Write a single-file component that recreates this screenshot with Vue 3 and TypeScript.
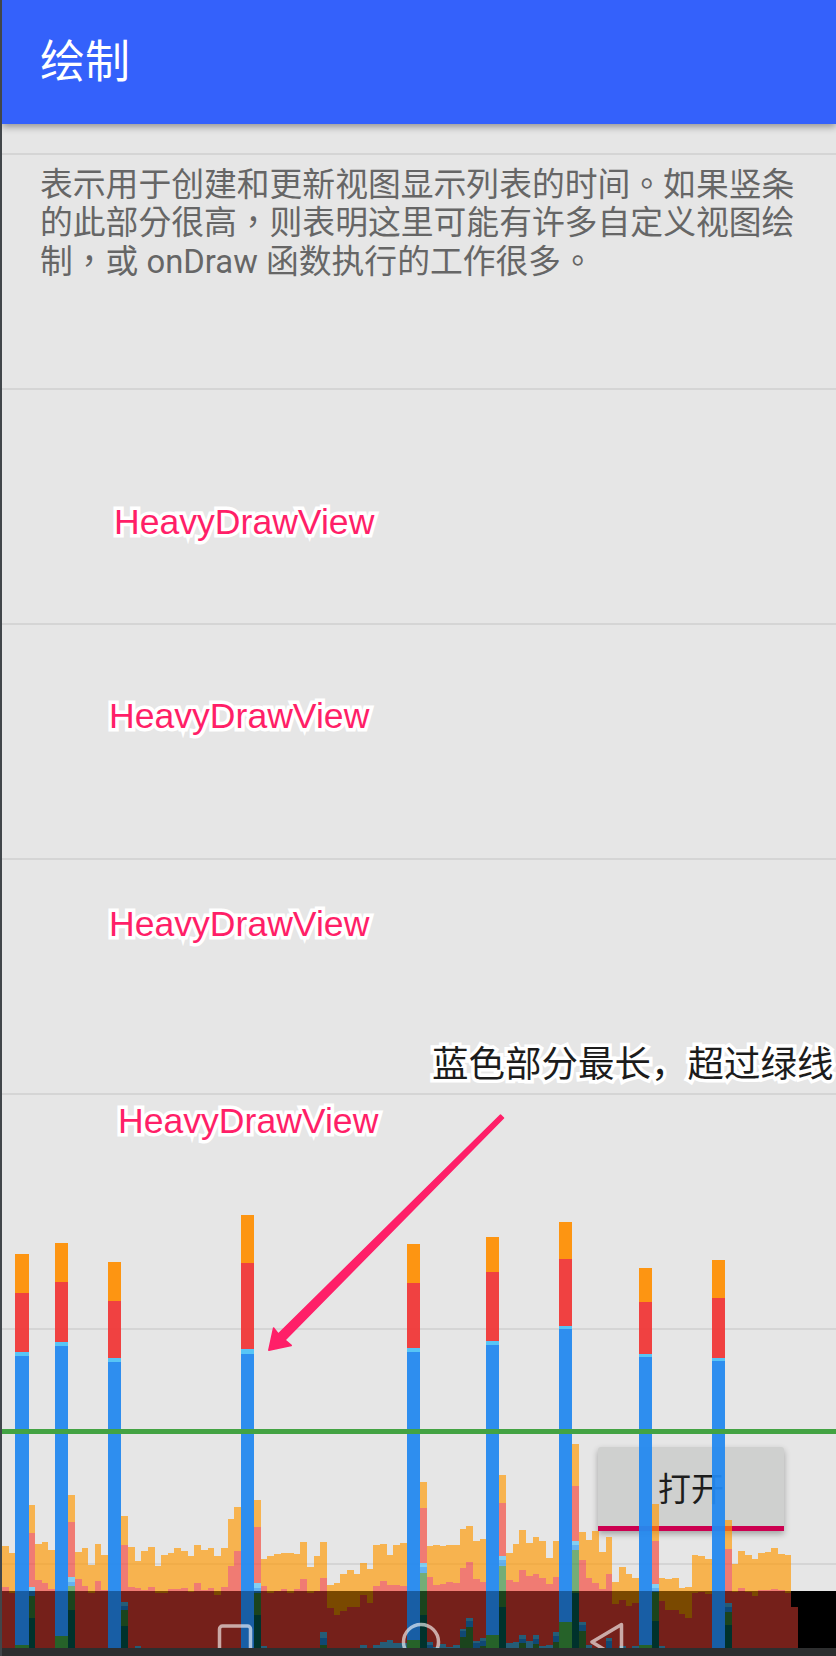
<template>
  <div class="screen">
    <header class="appbar">绘制</header>

    <main class="list">
      <div class="row row-stub"></div>
      <div class="row row-desc">
        <p class="desc">
          表示用于创建和更新视图显示列表的时间。如果竖条<br />的此部分很高，则表明这里可能有许多自定义视图绘<br />制，或 onDraw 函数执行的工作很多。
        </p>
      </div>
      <div class="row"></div>
      <div class="row"></div>
      <div class="row"></div>
      <div class="row"></div>
      <div class="row row-button">
        <button class="open-btn">打开</button>
      </div>
      <div class="row"></div>
    </main>

    <div class="navbar"></div>
    <div class="edge"></div>

    <!-- GPU 呈现模式条形图，叠在内容上方 -->
    <svg class="chart" width="836" height="448" viewBox="0 1200 836 448">
      <rect
        v-for="(seg, i) in segments"
        :key="i"
        :class="[seg.kind, { solid: seg.solid }]"
        :x="seg.x"
        :y="seg.y"
        :width="seg.w"
        :height="seg.h"
      />
    </svg>
    <div class="threshold"></div>

    <div class="nav-scrim">
      <svg width="836" height="57" viewBox="0 1591 836 57">
        <rect class="nav-icon" x="219.5" y="1626" width="31" height="40" rx="3" />
        <circle class="nav-icon" cx="421" cy="1642" r="17.5" />
        <path class="nav-icon" d="M621.5 1624.5 L592 1642 L621.5 1660 Z" />
      </svg>
    </div>

    <!-- 截图上的标注 -->
    <span
      v-for="label in labels"
      :key="label.top"
      class="note"
      :style="{ left: `${label.left}px`, top: `${label.top}px` }"
    >HeavyDrawView</span>
    <span class="note note-dark">蓝色部分最长，超过绿线</span>
    <svg class="arrow" width="836" height="260" viewBox="0 1100 836 260">
      <polygon points="500.5,1115 503.5,1118 285,1340 291.2,1345.4 268.8,1350.2 273.6,1328 278.3,1334" />
    </svg>
  </div>
</template>

<script setup lang="ts">
interface Segment {
  kind: string
  solid: boolean
  x: number
  y: number
  w: number
  h: number
}

const SLOT = 6.633
const CHART_Y = 1200
const BOTTOM = 448

// 每列顶部坐标（相对 CHART_Y），0 表示被高柱占用
const orange = [
  346, 353, 0, 0, 305, 344, 342, 350, 0, 0,
  295, 352, 348, 365, 344, 355, 0, 0, 316, 347,
  361, 351, 347, 366, 355, 353, 348, 351, 356, 345,
  350, 348, 356, 348, 319, 307, 0, 0, 300, 359,
  356, 354, 353, 353, 354, 342, 367, 356, 342, 385,
  383, 374, 370, 374, 363, 369, 345, 344, 355, 345,
  343, 0, 0, 282, 346, 345, 346, 345, 345, 329,
  326, 341, 339, 0, 0, 275, 353, 344, 330, 343,
  337, 341, 358, 341, 0, 0, 244, 332, 340, 331,
  352, 337, 382, 367, 374, 378, 0, 0, 304, 378,
  379, 378, 388, 387, 355, 356, 359, 0, 0, 320,
  364, 351, 355, 359, 353, 352, 348, 354, 355, 407
]

const red = [
  387, 393, 0, 0, 333, 380, 383, 389, 0, 0,
  322, 379, 386, 393, 381, 390, 0, 0, 345, 387,
  388, 390, 387, 393, 393, 389, 389, 388, 392, 383,
  390, 388, 395, 387, 366, 351, 0, 0, 327, 386,
  393, 391, 389, 393, 389, 379, 393, 391, 378, 408,
  415, 411, 407, 407, 395, 403, 386, 381, 385, 385,
  386, 0, 0, 308, 377, 385, 384, 382, 383, 368,
  362, 379, 382, 0, 0, 303, 380, 382, 370, 376,
  374, 378, 384, 377, 0, 0, 286, 360, 378, 383,
  389, 374, 404, 400, 406, 403, 0, 0, 341, 401,
  410, 410, 414, 418, 393, 392, 394, 0, 0, 349,
  392, 388, 392, 396, 390, 390, 389, 390, 393, 407
]

// 红色以下的层：sync, draw, measure, input
const lower: Record<number, number[]> = {
  4: [387, 391, 396, 418],
  10: [377, 382, 386, 410],
  18: [402, 406, 410, 426],
  20: [446],
  38: [383, 388, 393, 415],
  39: [446],
  48: [432, 438, 445],
  54: [445],
  56: [445],
  57: [442],
  58: [440],
  59: [443],
  60: [443],
  63: [363, 367, 373, 415],
  64: [442, 445],
  65: [447],
  66: [444],
  67: [447],
  68: [445],
  69: [429, 431, 437],
  70: [418, 421, 427],
  71: [441, 443],
  72: [438, 441, 446],
  75: [356, 360, 366, 407],
  76: [443],
  77: [442],
  78: [435, 439, 443],
  79: [441],
  80: [435, 439, 444],
  81: [446],
  82: [445],
  83: [432, 436, 442],
  86: [341, 345, 350, 393],
  87: [422, 425, 431],
  88: [445],
  91: [438, 441],
  93: [446],
  95: [446],
  98: [384, 388, 392, 421],
  99: [446],
  109: [403, 407, 412, 425]
}

const tall: [number, number[]][] = [
  [2, [54, 93, 152, 156, 445]],
  [8, [43, 82, 142, 146, 436]],
  [16, [62, 101, 158, 162]],
  [36, [15, 63, 149, 154]],
  [61, [44, 83, 148, 152, 440]],
  [73, [37, 72, 141, 145, 435]],
  [84, [22, 59, 126, 129, 422]],
  [96, [68, 102, 154, 157, 445]],
  [107, [60, 98, 158, 161]]
]

const KINDS = ['swap', 'issue', 'sync', 'draw', 'measure', 'input']

// 列边缘取整，相邻半透明柱之间才不会有缝
const edge = (slot: number) => Math.round(2 + slot * SLOT)

function stack(slot: number, span: number, tops: number[], solid: boolean): Segment[] {
  return tops.map((top, i) => ({
    kind: KINDS[i],
    solid,
    x: edge(slot),
    y: CHART_Y + top,
    w: edge(slot + span) - edge(slot),
    h: (tops[i + 1] ?? BOTTOM) - top
  }))
}

const segments: Segment[] = []
orange.forEach((top, slot) => {
  if (!top) return
  segments.push(...stack(slot, 1, [top, red[slot], ...(lower[slot] ?? [])], false))
})
tall.forEach(([slot, tops]) => {
  segments.push(...stack(slot, 2, tops, true))
})

const labels = [
  { left: 114, top: 502 },
  { left: 109, top: 696 },
  { left: 109, top: 904 },
  { left: 118, top: 1101 }
]
</script>

<style scoped>
.screen {
  position: relative;
  display: flex;
  flex-direction: column;
  width: 836px;
  height: 1656px;
  overflow: hidden;
  background: #e6e6e6;
  font-family: "Liberation Sans", "Noto Sans CJK SC", sans-serif;
}

.appbar {
  position: relative;
  z-index: 1;
  flex: none;
  box-sizing: border-box;
  height: 124px;
  padding: 36px 0 0 38px;
  margin-left: 2px;
  background: #3461fb;
  box-shadow: 0 3px 7px rgba(0, 0, 0, 0.35);
  color: #fff;
  font-family: "Roboto", "Noto Sans CJK SC", sans-serif;
  font-size: 45px;
  font-weight: 400;
  line-height: 54px;
}

.list {
  flex: 1;
  min-height: 0;
  overflow: hidden;
  margin-left: 2px;
}

.row {
  box-sizing: border-box;
  height: 235px;
  border-bottom: 2px solid #d5d5d5;
}

.row-stub {
  height: 31px;
}

.row-desc {
  padding: 11px 0 0 38px;
}

.desc {
  margin: 0;
  color: #666;
  font-family: "Roboto", "Noto Sans CJK TC", sans-serif;
  font-size: 32.8px;
  line-height: 38.3px;
  white-space: nowrap;
}

.row-button {
  display: flex;
  justify-content: flex-end;
  padding: 117px 52px 0 0;
}

.open-btn {
  box-sizing: border-box;
  width: 186px;
  height: 84px;
  padding: 0 0 0 0;
  border: 0;
  border-bottom: 5px solid #cc0050;
  border-radius: 3px 3px 0 0;
  background: #cfd0cf;
  box-shadow: 0 3px 6px rgba(0, 0, 0, 0.3);
  color: #1d1d1d;
  font-family: "Noto Sans CJK SC", sans-serif;
  font-size: 33px;
}

.navbar {
  flex: none;
  height: 57px;
  margin-left: 2px;
  background: #000;
}

.edge {
  flex: none;
  height: 8px;
  background: #2d2e2f;
}

.screen::before {
  content: "";
  position: absolute;
  left: 0;
  top: 0;
  z-index: 6;
  width: 2px;
  height: 100%;
  background: #41464a;
}

.chart {
  position: absolute;
  left: 0;
  top: 1200px;
}

.chart rect {
  fill-opacity: 0.66;
}

.chart rect.solid {
  fill-opacity: 0.95;
}

.swap {
  fill: #ff9800;
}

.issue {
  fill: #f44336;
}

.sync {
  fill: #4fc3f7;
}

.draw {
  fill: #2196f3;
}

.measure {
  fill: #388e3c;
}

.input {
  fill: #00695c;
}

.chart .swap.solid {
  fill: #fe9006;
}

.chart .issue.solid {
  fill: #f03838;
}

.chart .draw.solid {
  fill: #2489ef;
}

.threshold {
  position: absolute;
  left: 2px;
  right: 0;
  top: 1429px;
  height: 5px;
  background: #43a343;
}

.nav-scrim {
  position: absolute;
  left: 2px;
  right: 0;
  bottom: 8px;
  height: 57px;
  overflow: hidden;
  background: rgba(0, 0, 0, 0.27);
}

.nav-scrim svg {
  display: block;
  margin-left: -2px;
}

.nav-icon {
  fill: none;
  stroke: rgba(255, 255, 255, 0.62);
  stroke-width: 3.5;
  stroke-linejoin: round;
}

.note {
  position: absolute;
  z-index: 5;
  color: #ff1f68;
  font-size: 35.6px;
  line-height: 40px;
  white-space: nowrap;
  -webkit-text-stroke: 7px #fff;
  paint-order: stroke fill;
}

.note-dark {
  left: 432px;
  top: 1042px;
  color: #1c1c1c;
  font-family: "Noto Sans CJK SC", sans-serif;
  font-size: 36.5px;
}

.arrow {
  position: absolute;
  left: 0;
  top: 1100px;
  z-index: 5;
}

.arrow polygon {
  fill: #ff1f68;
  stroke: #ff1f68;
  stroke-width: 1.5;
  stroke-linejoin: round;
}
</style>
